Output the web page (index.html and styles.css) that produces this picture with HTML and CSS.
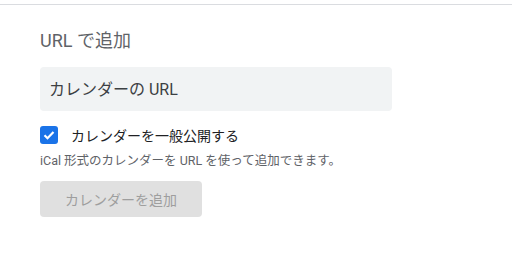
FILE: index.html
```html
<!DOCTYPE html>
<html lang="ja">
  <head>
    <meta charset="UTF-8" />
    <title>URL で追加</title>
    <link rel="stylesheet" href="styles.css">
  </head>
  <body>
    <div class="divider"></div>
    <section class="panel">
      <h2 class="title">URL で追加</h2>
      <input type="text" class="url-input" placeholder="カレンダーの URL" />
      <label class="check-row">
        <span class="check-box">
          <svg viewBox="0 0 18 18" width="18" height="18">
            <path d="M4.5 9.2l3 3 6-6.2" fill="none" stroke="#fff" stroke-width="2.2" />
          </svg>
        </span>
        <span class="check-label">カレンダーを一般公開する</span>
      </label>
      <p class="help">iCal 形式のカレンダーを URL を使って追加できます。</p>
      <button class="add-btn" disabled>カレンダーを追加</button>
    </section>
  </body>
</html>
```

FILE: styles.css
```css
* {
  box-sizing: border-box;
  margin: 0;
  padding: 0;
}

body {
  background: #fff;
  font-family: Roboto, "Noto Sans CJK JP", sans-serif;
  color: #3c4043;
}

.divider {
  margin-top: 4px;
  height: 1px;
  background: #dadce0;
}

.panel {
  padding: 24px 40px 0;
}

.title {
  font-size: 18px;
  font-weight: 400;
  color: #5f6368;
  line-height: 24px;
}

.url-input {
  display: block;
  margin-top: 14px;
  width: 352px;
  height: 44px;
  padding: 0 9px;
  border: none;
  border-radius: 4px;
  background: #f1f3f4;
  font-family: inherit;
  font-size: 16px;
  outline: none;
}

.url-input::placeholder {
  color: #3c4043;
  opacity: 1;
}

.check-row {
  display: flex;
  align-items: center;
  gap: 13px;
  margin-top: 15px;
  height: 18px;
}

.check-box {
  flex-shrink: 0;
  width: 18px;
  height: 18px;
  border-radius: 3px;
  background: #1a73e8;
  display: flex;
}

.check-label {
  font-size: 14px;
  color: #202124;
}

.help {
  margin-top: 9px;
  font-size: 12.5px;
  line-height: 16px;
  color: #5f6368;
}

.add-btn {
  margin-top: 12px;
  width: 162px;
  height: 36px;
  border: none;
  border-radius: 4px;
  background: #e0e0e0;
  color: #9e9e9e;
  font-family: inherit;
  font-size: 14px;
}
```
